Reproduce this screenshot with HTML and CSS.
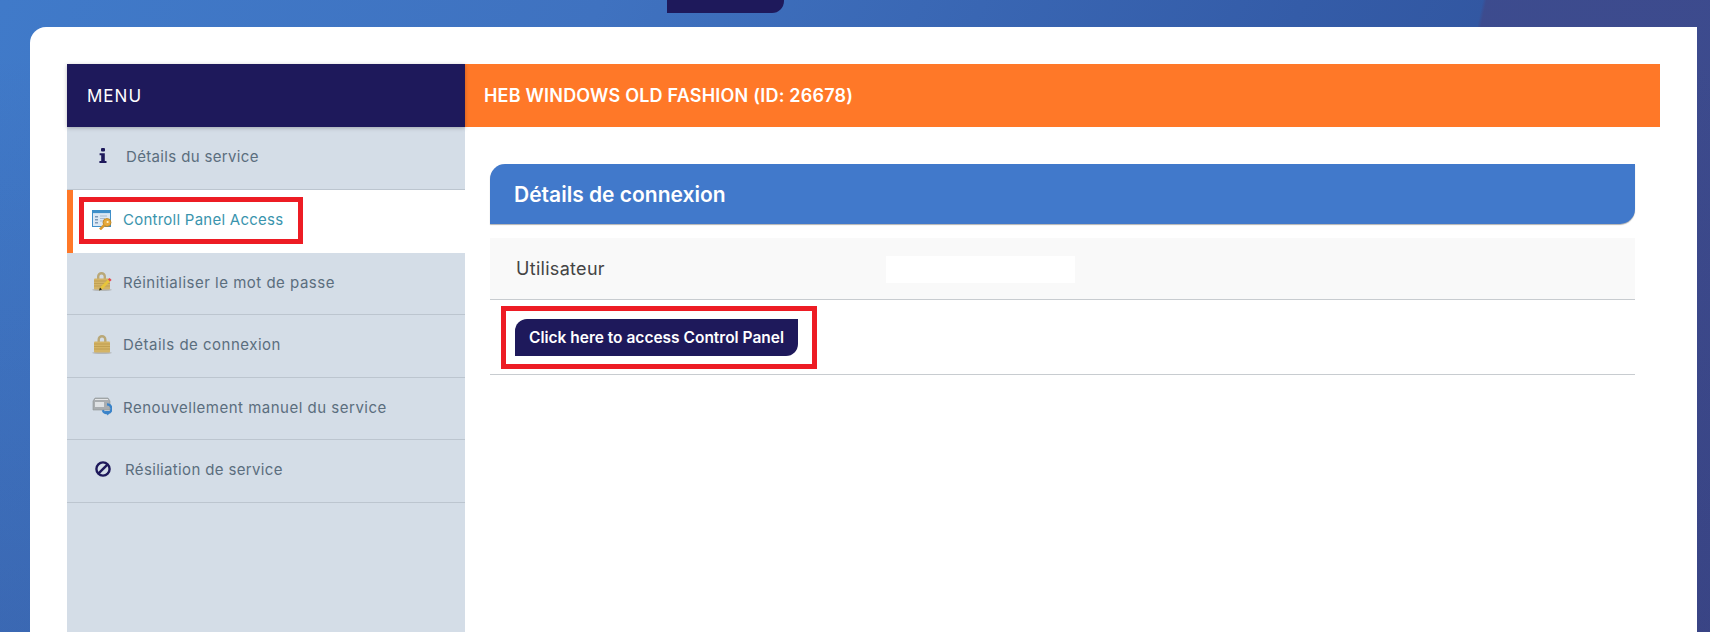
FILE: index.html
```html
<!DOCTYPE html>
<html lang="fr">
<head>
  <meta charset="UTF-8">
  <meta name="viewport" content="width=device-width, initial-scale=1.0">
  <title>Controll Panel Access</title>
  <link rel="stylesheet" href="styles.css">
</head>
<body>
  <div class="top-strip">
    <div class="top-tab"></div>
  </div>

  <div class="card">
    <div class="layout">
      <aside class="sidebar">
        <div class="menu-title">MENU</div>
        <ul class="menu">
          <li class="menu-item menu-item-fa">
            <svg class="fa-icon icon-info" width="8" height="15" viewBox="0 0 8 15">
              <rect x="2" y="0" width="4" height="3.4" rx="1" fill="#1e195b"/>
              <path d="M0.6 5.2h5.2v7.7h1.7v2H0.4v-2h1.8V7.2H0.6z" fill="#1e195b"/>
            </svg>
            <span>Détails du service</span>
          </li>
          <li class="menu-item active">
            <svg class="img-icon" width="20" height="20" viewBox="0 0 20 20">
              <rect x="0.5" y="0.5" width="18" height="16" fill="#dce8f4" stroke="#3f8fc9"/>
              <rect x="0.5" y="0.5" width="18" height="2.6" fill="#3f8fc9"/>
              <path d="M3 6h3v1.6H3zM3 9h3v1.6H3zM3 12h3v1.6H3z" fill="#7d99b8"/>
              <path d="M8 6h7M8 8.5h5M8 11h3" stroke="#a9bccf" stroke-width="1"/>
              <circle cx="15" cy="12.5" r="4" fill="#e8aa3c" stroke="#b57f1f" stroke-width="0.8"/>
              <path d="M12.4 15L8 19.4" stroke="#d99a2e" stroke-width="2.6"/>
              <circle cx="15.6" cy="12" r="1.1" fill="#fff3d0"/>
            </svg>
            <span>Controll Panel Access</span>
            <div class="annotation annotation-menu"></div>
          </li>
          <li class="menu-item">
            <svg class="img-icon" width="20" height="20" viewBox="0 0 20 20">
              <ellipse cx="10" cy="18.8" rx="10" ry="1.2" fill="#b4b7b8"/>
              <path d="M5 8V5.5a4.5 4.5 0 0 1 9 0V8h-2.4V5.5a2.1 2.1 0 0 0-4.2 0V8z" fill="#b9a878"/>
              <rect x="2" y="7.5" width="16" height="11" rx="1" fill="#d4b466"/>
              <path d="M2 10h16M2 12.5h16M2 15h16" stroke="#bb9a4c" stroke-width="0.8"/>
              <path d="M7 19.5l1-3 8-8 2 2-8 8z" fill="#e8c53a"/>
              <path d="M7 19.5l1-3 2 2z" fill="#222"/>
              <path d="M16 8.5l1.6-1.6 2 2L18 10.5z" fill="#e5474e"/>
            </svg>
            <span>Réinitialiser le mot de passe</span>
          </li>
          <li class="menu-item">
            <svg class="img-icon" width="20" height="20" viewBox="0 0 20 20">
              <ellipse cx="10" cy="18.8" rx="10" ry="1.2" fill="#b4b7b8"/>
              <path d="M5.5 8V5.5a4.5 4.5 0 0 1 9 0V8h-2.4V5.5a2.1 2.1 0 0 0-4.2 0V8z" fill="#b9a878"/>
              <rect x="2" y="7.5" width="16" height="11" rx="1" fill="#d4b466"/>
              <path d="M2 10h16M2 12.5h16M2 15h16" stroke="#bb9a4c" stroke-width="0.8"/>
            </svg>
            <span>Détails de connexion</span>
          </li>
          <li class="menu-item">
            <svg class="img-icon" width="20" height="20" viewBox="0 0 20 20">
              <path d="M1 5l2-3h13l2 3v9H1z" fill="#a9adb0" stroke="#8f9396" stroke-width="0.6"/>
              <rect x="3" y="6" width="9" height="5" fill="#dfe2e4"/>
              <path d="M3 3.5h13" stroke="#e4e6e8"/>
              <path d="M15 8.4a4.4 4.4 0 1 1-4.2 5.8" fill="none" stroke="#3a83c9" stroke-width="2.2"/>
              <path d="M12.6 15l3.2 4.6 2.6-4.6z" fill="#3a83c9"/>
            </svg>
            <span>Renouvellement manuel du service</span>
          </li>
          <li class="menu-item menu-item-fa">
            <svg class="fa-icon" width="16" height="16" viewBox="0 0 16 16">
              <circle cx="8" cy="8" r="6.6" fill="none" stroke="#1e195b" stroke-width="2.4"/>
              <path d="M3.6 12.4l8.8-8.8" stroke="#1e195b" stroke-width="2.4"/>
            </svg>
            <span>Résiliation de service</span>
          </li>
        </ul>
      </aside>

      <main class="content">
        <div class="service-title">HEB WINDOWS OLD FASHION (ID: 26678)</div>
        <section class="details">
          <h2 class="panel-head">Détails de connexion</h2>
          <div class="row row-user">
            <div class="row-label">Utilisateur</div>
            <div class="row-value"></div>
          </div>
          <div class="row row-action">
            <button class="access-btn">Click here to access Control Panel</button>
            <div class="annotation annotation-btn"></div>
          </div>
        </section>
      </main>
    </div>
  </div>
</body>
</html>
```

FILE: styles.css
```css
* {
    box-sizing: border-box;
}

html, body {
    height: 632px;
    overflow: hidden;
}

body {
    margin: 0;
    padding: 0 13px 0 30px;
    font-family: Inter, "Open Sans", sans-serif;
    background-color: #3a5ea8;
    background-image:
        linear-gradient(to bottom, rgba(40, 50, 110, 0) 8%, rgba(40, 50, 110, 0.2) 100%),
        linear-gradient(102deg, rgba(62, 74, 140, 0) 80.4%, rgba(62, 74, 140, 0.9) 80.6%),
        linear-gradient(115deg, #407ac9 0%, #3f72c0 30%, #345ca8 65%, #30529b 85%, #3a3f80 100%);
}

.top-strip {
    height: 27px;
}

.top-tab {
    width: 117px;
    height: 13px;
    margin-left: 637px;
    background-color: #1e195b;
    border-bottom-right-radius: 12px;
}

.card {
    height: 605px;
    padding: 37px 37px 0;
    background-color: white;
    border-top-left-radius: 16px;
}

.layout {
    display: flex;
    height: 100%;
}

.sidebar {
    width: 398px;
    flex-shrink: 0;
    background-color: #d4dde7;
}

.menu-title {
    height: 63px;
    padding-left: 20px;
    display: flex;
    align-items: center;
    font-size: 17px;
    letter-spacing: 1px;
    color: white;
    background-color: #1e195b;
    box-shadow: 0 1px 4px rgba(0, 0, 0, 0.25);
    position: relative;
}

.menu {
    list-style: none;
    margin: 0;
    padding: 0;
}

.menu-item {
    height: 62.5px;
    padding-left: 25px;
    display: flex;
    align-items: center;
    gap: 11px;
    font-size: 15px;
    letter-spacing: 0.5px;
    color: #5b6e7e;
    border-bottom: 1px solid #bcc5cf;
    position: relative;
}

.menu-item span {
    margin-top: -2px;
}

.menu-item svg {
    margin-top: -4px;
    flex-shrink: 0;
}

.menu-item-fa {
    padding-left: 28px;
    gap: 14px;
    letter-spacing: 0.35px;
}

.icon-info {
    margin-left: 4px;
    margin-right: 5px;
}

.menu-item.active {
    height: 63px;
    padding-left: 19px;
    letter-spacing: 0.25px;
    color: #3a94ad;
    background-color: white;
    border-left: 6px solid #ff7828;
    border-bottom: 0;
}

.menu-item.active span,
.menu-item.active svg {
    margin-top: -3px;
}

.annotation {
    position: absolute;
    border: 5px solid #ed1c24;
    pointer-events: none;
}

.annotation-menu {
    left: 6px;
    top: 7px;
    width: 224px;
    height: 47px;
}

.content {
    flex: 1;
    min-width: 0;
}

.service-title {
    height: 63px;
    padding-left: 19px;
    display: flex;
    align-items: center;
    font-size: 18px;
    font-weight: 600;
    letter-spacing: 0.2px;
    color: white;
    background-color: #ff7828;
}

.details {
    margin: 37px 25px 0;
}

.panel-head {
    height: 60px;
    margin: 0 0 14px;
    padding: 0 24px;
    display: flex;
    align-items: center;
    font-size: 21px;
    font-weight: 600;
    color: white;
    background-color: #4179cb;
    border-top-left-radius: 15px;
    border-bottom-right-radius: 15px;
    box-shadow: 0 1px 1px rgba(0, 0, 0, 0.3);
}

.row {
    display: flex;
    align-items: center;
    border-bottom: 1px solid #c8ccd0;
    position: relative;
}

.row-user {
    height: 62px;
    padding-left: 26px;
    background-color: #f9f9f9;
}

.row-label {
    width: 370px;
    font-size: 18px;
    letter-spacing: 0.3px;
    color: #444;
}

.row-value {
    width: 189px;
    height: 27px;
    margin-top: 2px;
    background-color: white;
}

.row-action {
    height: 75px;
    padding-left: 25px;
}

.access-btn {
    width: 283px;
    height: 37px;
    padding: 0;
    border: 0;
    font-family: inherit;
    font-size: 15.5px;
    font-weight: 600;
    color: white;
    background-color: #1e195b;
    border-top-left-radius: 12px;
    border-bottom-right-radius: 12px;
}

.annotation-btn {
    left: 11px;
    top: 6px;
    width: 316px;
    height: 63px;
}
```
